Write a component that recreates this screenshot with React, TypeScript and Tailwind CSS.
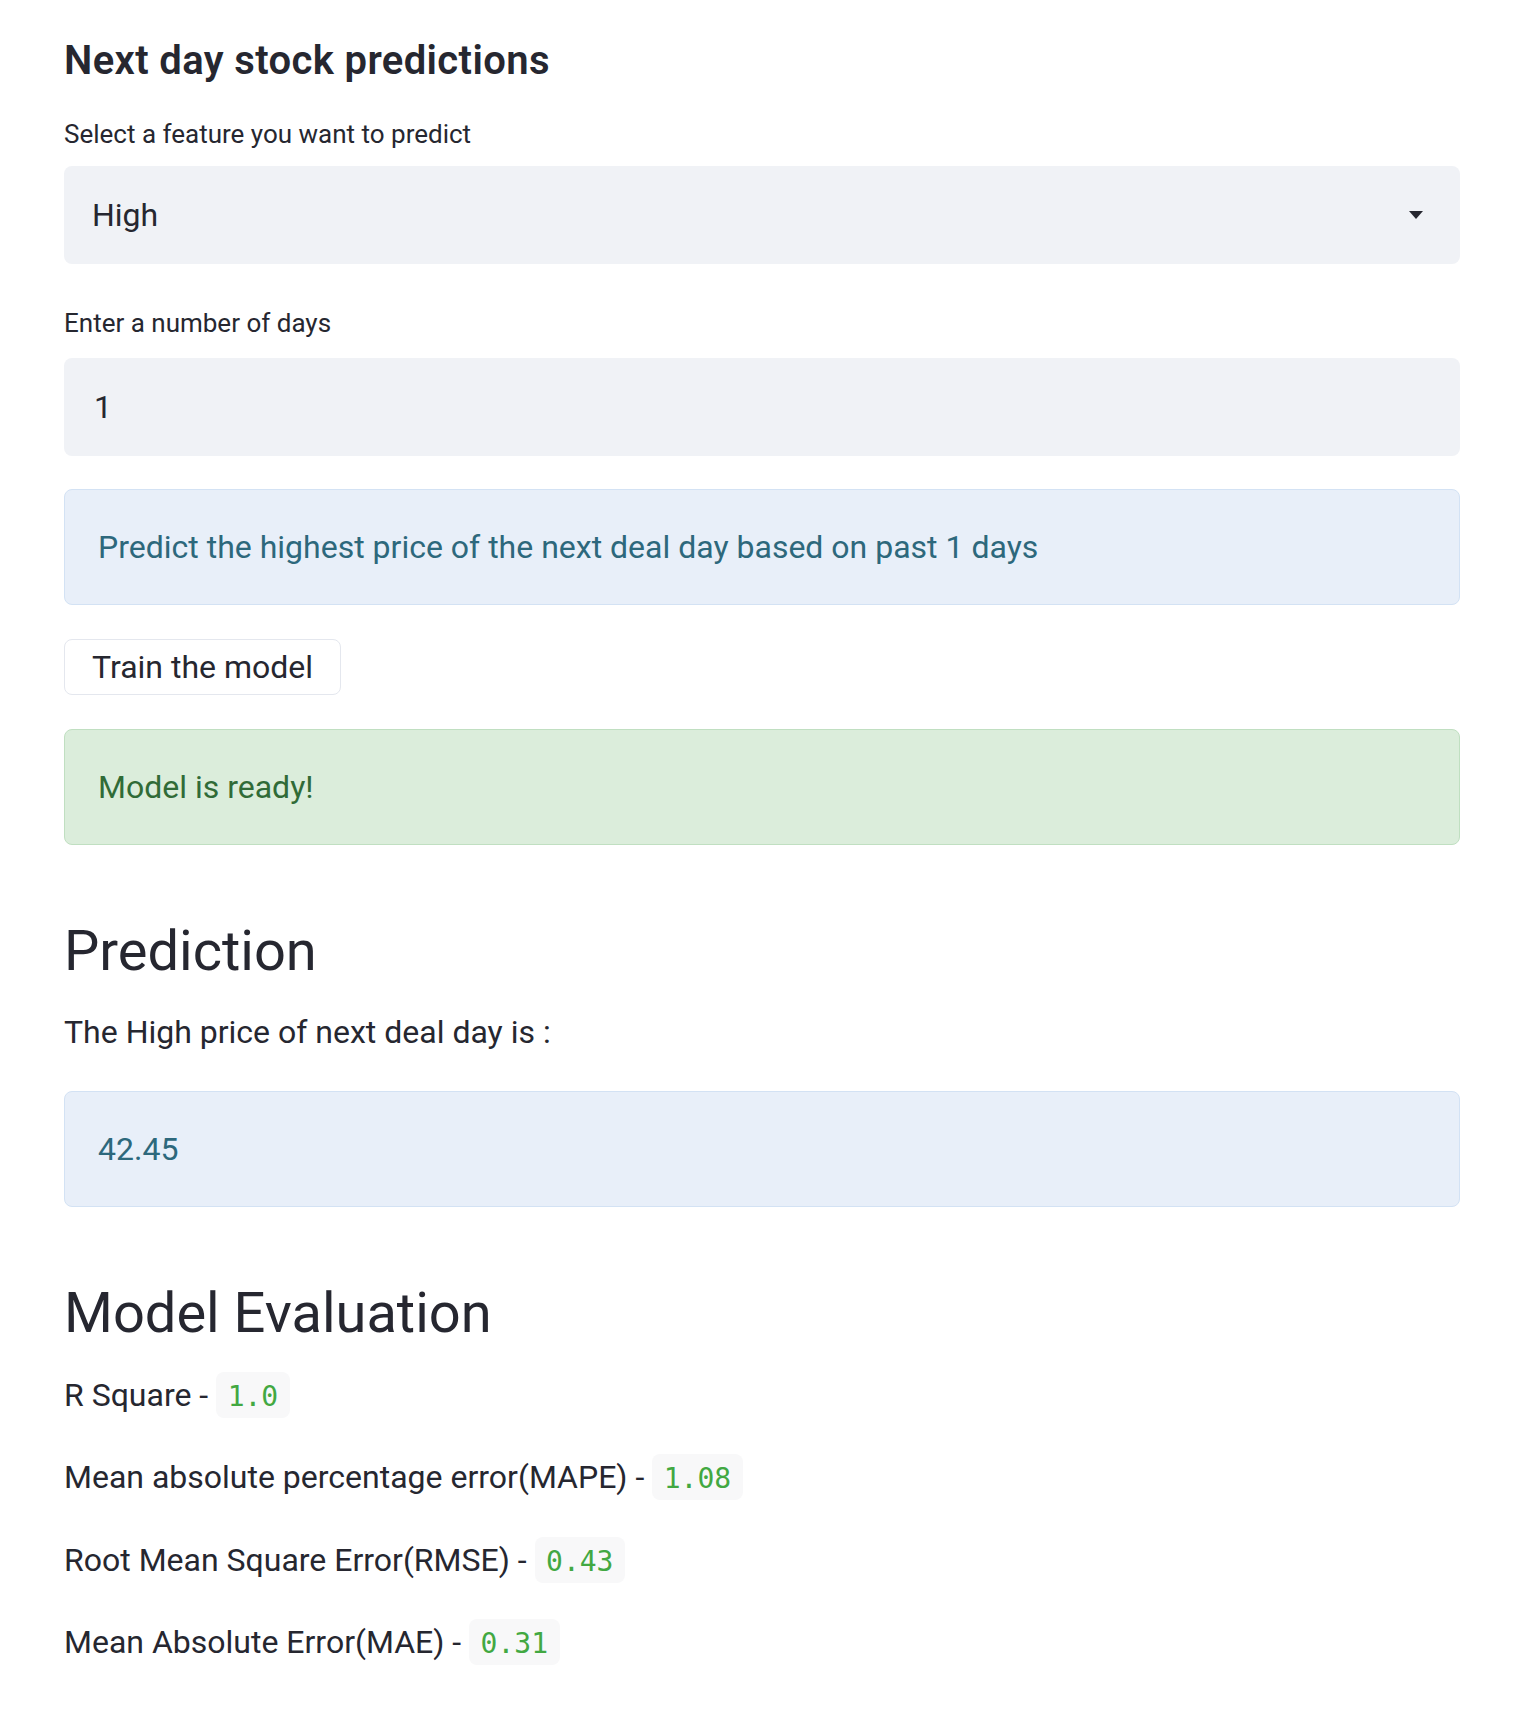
import React from "react";

const sans = "font-['Roboto',_'Liberation_Sans',_sans-serif]";

function Code({ children }: { children: React.ReactNode }) {
  return (
    <span className="inline-block align-baseline rounded-[8px] bg-[#f8f8f9] px-[11.5px] pt-[9px] pb-[5px] text-[28px] leading-[32px] text-[#42a842] font-['DejaVu_Sans_Mono',_'Liberation_Mono',_monospace]">
      {children}
    </span>
  );
}

export default function App() {
  return (
    <div className={`min-h-[1712px] w-full bg-white text-[#262730] ${sans}`}>
      <div className="ml-[64px] w-[1396px] pt-[37px]">
        <h3 className="h-[48px] text-[40px] leading-[48px] font-semibold tracking-[0.37px]">Next day stock predictions</h3>

        <div className="mt-[31px] h-[36px] text-[26px] leading-[36px]">Select a feature you want to predict</div>
        <div className="mt-[14px] flex h-[98px] items-center justify-between rounded-[8px] bg-[#f0f2f6] pl-[28px] pr-[37px]">
          <span className="text-[32px] leading-[51px]">High</span>
          <svg width="14" height="8" viewBox="0 0 14 8" className="block">
            <path d="M0 0 H14 L7 8 Z" fill="#262730" />
          </svg>
        </div>

        <div className="mt-[41px] h-[36px] text-[26px] leading-[36px]">Enter a number of days</div>
        <div className="mt-[17px] flex h-[98px] items-center rounded-[8px] bg-[#f0f2f6] pl-[30px]">
          <span className="text-[32px] leading-[51px]">1</span>
        </div>

        <div className="mt-[33px] flex h-[116px] items-center rounded-[8px] border-[1.5px] border-[#d3e2f4] bg-[#e8eff9] px-[33px]">
          <span className="text-[32px] leading-[51px] text-[#2d687c]">Predict the highest price of the next deal day based on past 1 days</span>
        </div>

        <button className="mt-[34px] flex h-[56px] items-center rounded-[8px] border-[1.5px] border-[#e4e7ee] bg-white px-[27px] text-[32px] leading-[51px] text-[#262730]">
          Train the model
        </button>

        <div className="mt-[34px] flex h-[116px] items-center rounded-[8px] border-[1.5px] border-[#c0dfc1] bg-[#dbeddb] px-[33px]">
          <span className="text-[32px] leading-[51px] text-[#306b37]">Model is ready!</span>
        </div>

        <h2 className="mt-[72px] h-[68px] text-[56px] leading-[68px] font-normal">Prediction</h2>
        <p className="mt-[22px] h-[51px] text-[32px] leading-[51px]">The High price of next deal day is :</p>

        <div className="mt-[33px] flex h-[116px] items-center rounded-[8px] border-[1.5px] border-[#d3e2f4] bg-[#e8eff9] px-[33px]">
          <span className="text-[32px] leading-[51px] text-[#2d687c]">42.45</span>
        </div>

        <h2 className="mt-[72px] h-[68px] text-[56px] leading-[68px] font-normal">Model Evaluation</h2>

        <p className="mt-[23px] h-[51px] text-[32px] leading-[51px]">
          R Square - <Code>1.0</Code>
        </p>
        <p className="mt-[31px] h-[51px] text-[32px] leading-[51px]">
          Mean absolute percentage error(MAPE) - <Code>1.08</Code>
        </p>
        <p className="mt-[32px] h-[51px] text-[32px] leading-[51px]">
          Root Mean Square Error(RMSE) - <Code>0.43</Code>
        </p>
        <p className="mt-[31px] h-[51px] text-[32px] leading-[51px]">
          Mean Absolute Error(MAE) - <Code>0.31</Code>
        </p>
      </div>
    </div>
  );
}
